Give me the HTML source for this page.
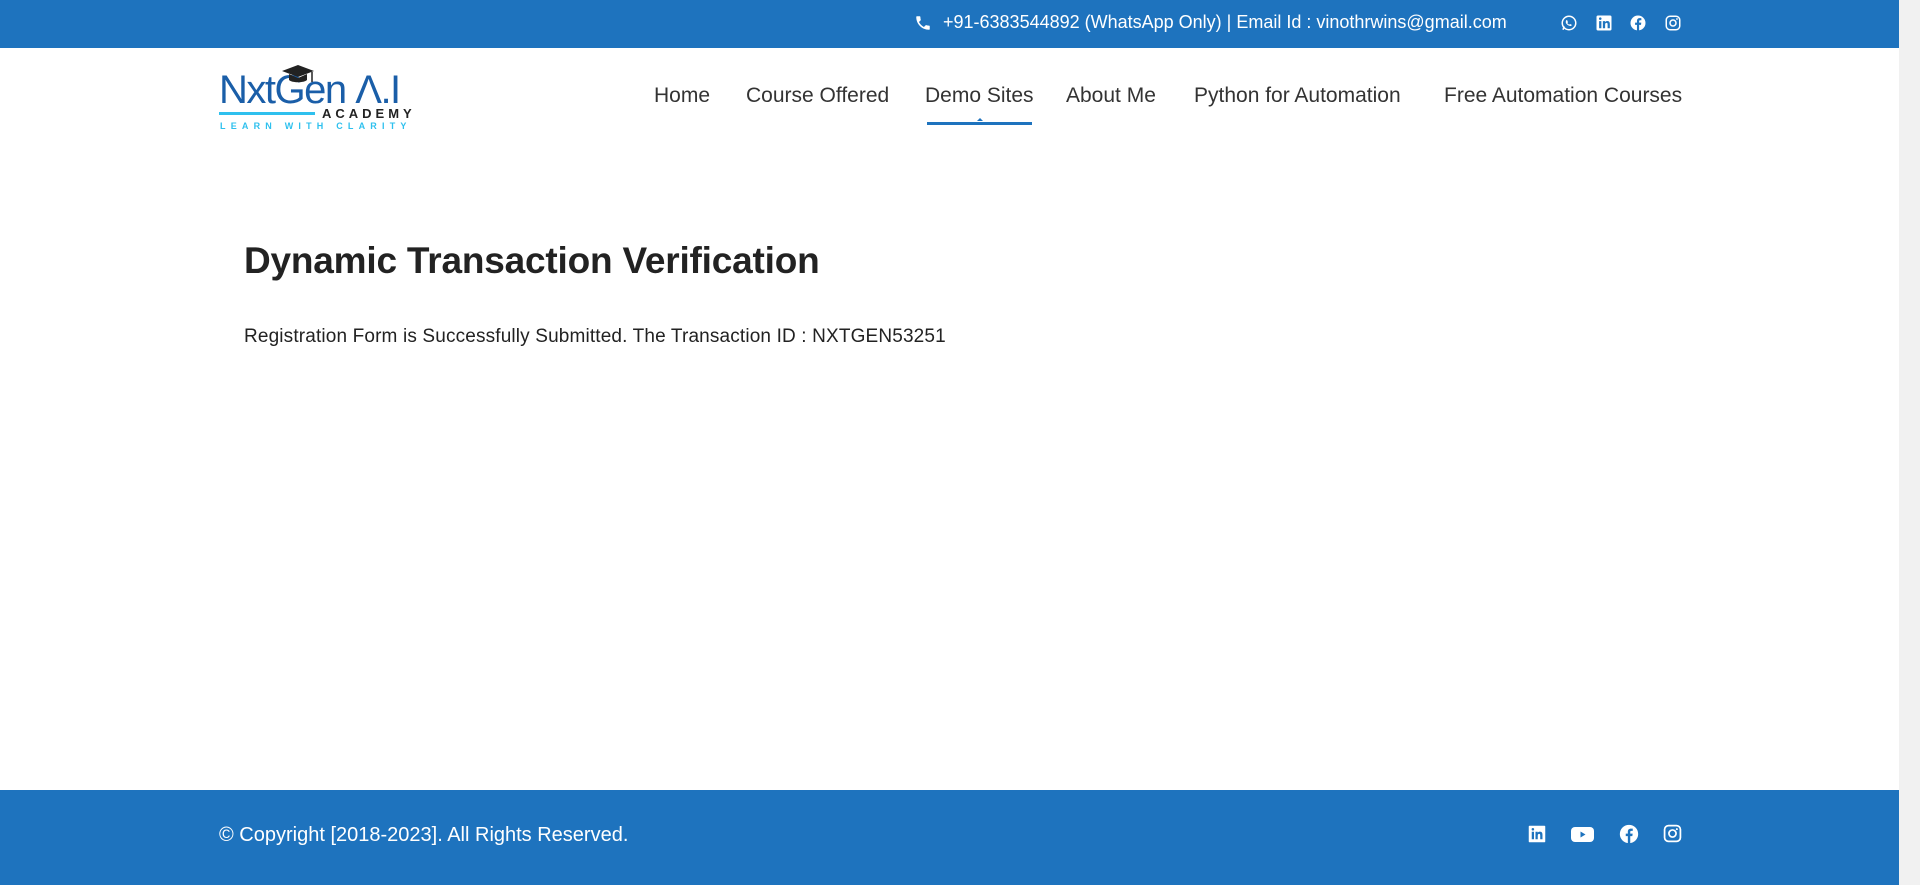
<!DOCTYPE html>
<html><head><meta charset="utf-8"><style>
*{margin:0;padding:0;box-sizing:border-box}
body{width:1920px;height:885px;overflow:hidden;background:#fff;font-family:"Liberation Sans",sans-serif;position:relative}
.top{position:absolute;left:0;top:0;width:1899px;height:48px;background:#1e73be;color:#fff}
.sb{position:absolute;right:0;top:0;width:21px;height:885px;background:#f1f1f1}
.abs{position:absolute}
.nav a{position:absolute;top:84px;font-size:21px;color:#333;text-decoration:none;white-space:nowrap}
.foot{position:absolute;left:0;top:790px;width:1899px;height:95px;background:#1e73be;color:#fff}
svg{display:block}
</style></head><body>
<div class="top">
  <svg class="abs" style="left:914px;top:14px" width="18" height="18" viewBox="0 0 24 24"><path fill="#fff" d="M20 15.5c-1.2 0-2.4-.2-3.6-.6-.3-.1-.7 0-1 .2l-2.2 2.2c-2.8-1.4-5.1-3.8-6.6-6.6l2.2-2.2c.3-.3.4-.7.2-1C8.7 6.4 8.5 5.2 8.5 4c0-.6-.4-1-1-1H4c-.6 0-1 .4-1 1 0 9.4 7.6 17 17 17 .6 0 1-.4 1-1v-3.5c0-.6-.4-1-1-1z"/></svg>
  <div class="abs" style="left:943px;top:12px;font-size:18px;white-space:nowrap">+91-6383544892 (WhatsApp Only) | Email Id : vinothrwins@gmail.com</div>
  <svg class="abs" style="left:1560px;top:14px" width="18" height="18" viewBox="0 0 24 24"><circle cx="12" cy="12" r="9" fill="none" stroke="#fff" stroke-width="2"/><path d="M4 21l1.5-4.5" stroke="#fff" stroke-width="2"/><path fill="#fff" d="M9 8c1 0 1 2 1.5 2.5S9.5 12 10 12.5s2 2 2.5 1.5 1-1 2.5 0 0 2-1 2-4-1-5.5-3S8 8 9 8z"/></svg>
  <svg class="abs" style="left:1595px;top:14px" width="18" height="18" viewBox="0 0 24 24"><rect x="2" y="2" width="20" height="20" rx="2" fill="#fff"/><path fill="#1e73be" d="M5.5 9.5h3V19h-3zM7 4.5a1.7 1.7 0 110 3.4 1.7 1.7 0 010-3.4zM10.5 9.5h2.9v1.3c.4-.8 1.4-1.5 2.9-1.5 3 0 3.5 2 3.5 4.5V19h-3v-4.6c0-1.1 0-2.5-1.5-2.5s-1.8 1.2-1.8 2.4V19h-3z"/></svg>
  <svg class="abs" style="left:1629px;top:14px" width="18" height="18" viewBox="0 0 24 24"><circle cx="12" cy="12" r="10" fill="#fff"/><path fill="#1e73be" d="M13.5 22v-7.5H16l.4-3h-2.9V9.7c0-.9.3-1.4 1.5-1.4h1.5V5.6c-.3 0-1.2-.1-2.2-.1-2.2 0-3.7 1.3-3.7 3.8v2.2H8.1v3h2.5V22z"/></svg>
  <svg class="abs" style="left:1664px;top:14px" width="18" height="18" viewBox="0 0 24 24"><rect x="3" y="3" width="18" height="18" rx="5" fill="none" stroke="#fff" stroke-width="2"/><circle cx="12" cy="12" r="4" fill="none" stroke="#fff" stroke-width="2"/><circle cx="17.3" cy="6.7" r="1.2" fill="#fff"/></svg>
</div>
<div class="sb"></div>

<div class="abs" style="left:219px;top:64px;width:200px;height:70px">
  <div class="abs" style="left:0;top:6px;font-size:40px;color:#1a5ea8;letter-spacing:-1.5px;white-space:nowrap;line-height:1">NxtGen Λ.I</div>
  <svg class="abs" style="left:62px;top:0" width="34" height="24" viewBox="0 0 34 24"><path fill="#222" d="M17 1 33 7 17 13 1 7z"/><path fill="#222" d="M8 10v6c3 3 15 3 18 0v-6l-9 4z"/><path d="M31 8v10" stroke="#222" stroke-width="1.5"/></svg>
  <div class="abs" style="left:0;top:48px;width:96px;height:3px;background:#2ec0ee"></div>
  <div class="abs" style="left:103px;top:42px;font-size:13px;color:#222;letter-spacing:4px;font-weight:bold">ACADEMY</div>
  <div class="abs" style="left:1px;top:57px;font-size:9px;color:#2ec0ee;letter-spacing:5.2px;white-space:nowrap;font-weight:bold">LEARN WITH CLARITY</div>
</div>

<div class="nav">
  <a style="left:654px">Home</a>
  <a style="left:746px">Course Offered</a>
  <a style="left:925px">Demo Sites</a>
  <a style="left:1066px">About Me</a>
  <a style="left:1194px">Python for Automation</a>
  <a style="left:1444px">Free Automation Courses</a>
</div>
<div class="abs" style="left:927px;top:122px;width:105px;height:3px;background:#1e73be"></div>
<div class="abs" style="left:977px;top:118px;width:0;height:0;border-left:3px solid transparent;border-right:3px solid transparent;border-bottom:3px solid #1e73be"></div>

<h1 class="abs" style="left:244px;top:240px;font-size:37px;font-weight:bold;color:#222;letter-spacing:-0.2px;white-space:nowrap">Dynamic Transaction Verification</h1>
<p class="abs" style="left:244px;top:326px;font-size:19px;color:#222;white-space:nowrap;letter-spacing:0.15px">Registration Form is Successfully Submitted. The Transaction ID : NXTGEN53251</p>

<div class="foot">
  <div class="abs" style="left:219px;top:34px;font-size:20px;white-space:nowrap">© Copyright [2018-2023]. All Rights Reserved.</div>
  <svg class="abs" style="left:1528px;top:35px" width="18" height="18" viewBox="0 0 24 24"><rect x="1" y="1" width="22" height="22" rx="1" fill="#fff"/><path fill="#1e73be" d="M5 9h3v10H5zM6.5 4a1.7 1.7 0 110 3.4 1.7 1.7 0 010-3.4zM10 9h2.9v1.3c.4-.8 1.4-1.5 2.9-1.5 3 0 3.5 2 3.5 4.5V19h-3v-4.6c0-1.1 0-2.5-1.5-2.5S13 13.1 13 14.3V19h-3z"/></svg>
  <svg class="abs" style="left:1571px;top:35px" width="23" height="18" viewBox="0 0 23 18"><rect x="0" y="2" width="23" height="15" rx="4" fill="#fff"/><path fill="#1e73be" d="M9.5 6.5v6l5-3z"/></svg>
  <svg class="abs" style="left:1619px;top:34px" width="20" height="20" viewBox="0 0 24 24"><circle cx="12" cy="12" r="11" fill="#fff"/><path fill="#1e73be" d="M13.5 24v-9.5H16l.4-3h-2.9V9.7c0-.9.3-1.4 1.5-1.4h1.5V5.6c-.3 0-1.2-.1-2.2-.1-2.2 0-3.7 1.3-3.7 3.8v2.2H8.1v3h2.5V24z"/></svg>
  <svg class="abs" style="left:1663px;top:34px" width="19" height="19" viewBox="0 0 24 24"><rect x="2" y="2" width="20" height="20" rx="5" fill="none" stroke="#fff" stroke-width="2.2"/><circle cx="12" cy="12" r="4.5" fill="none" stroke="#fff" stroke-width="2.2"/><circle cx="17.5" cy="6.5" r="1.3" fill="#fff"/></svg>
</div>
</body></html>
